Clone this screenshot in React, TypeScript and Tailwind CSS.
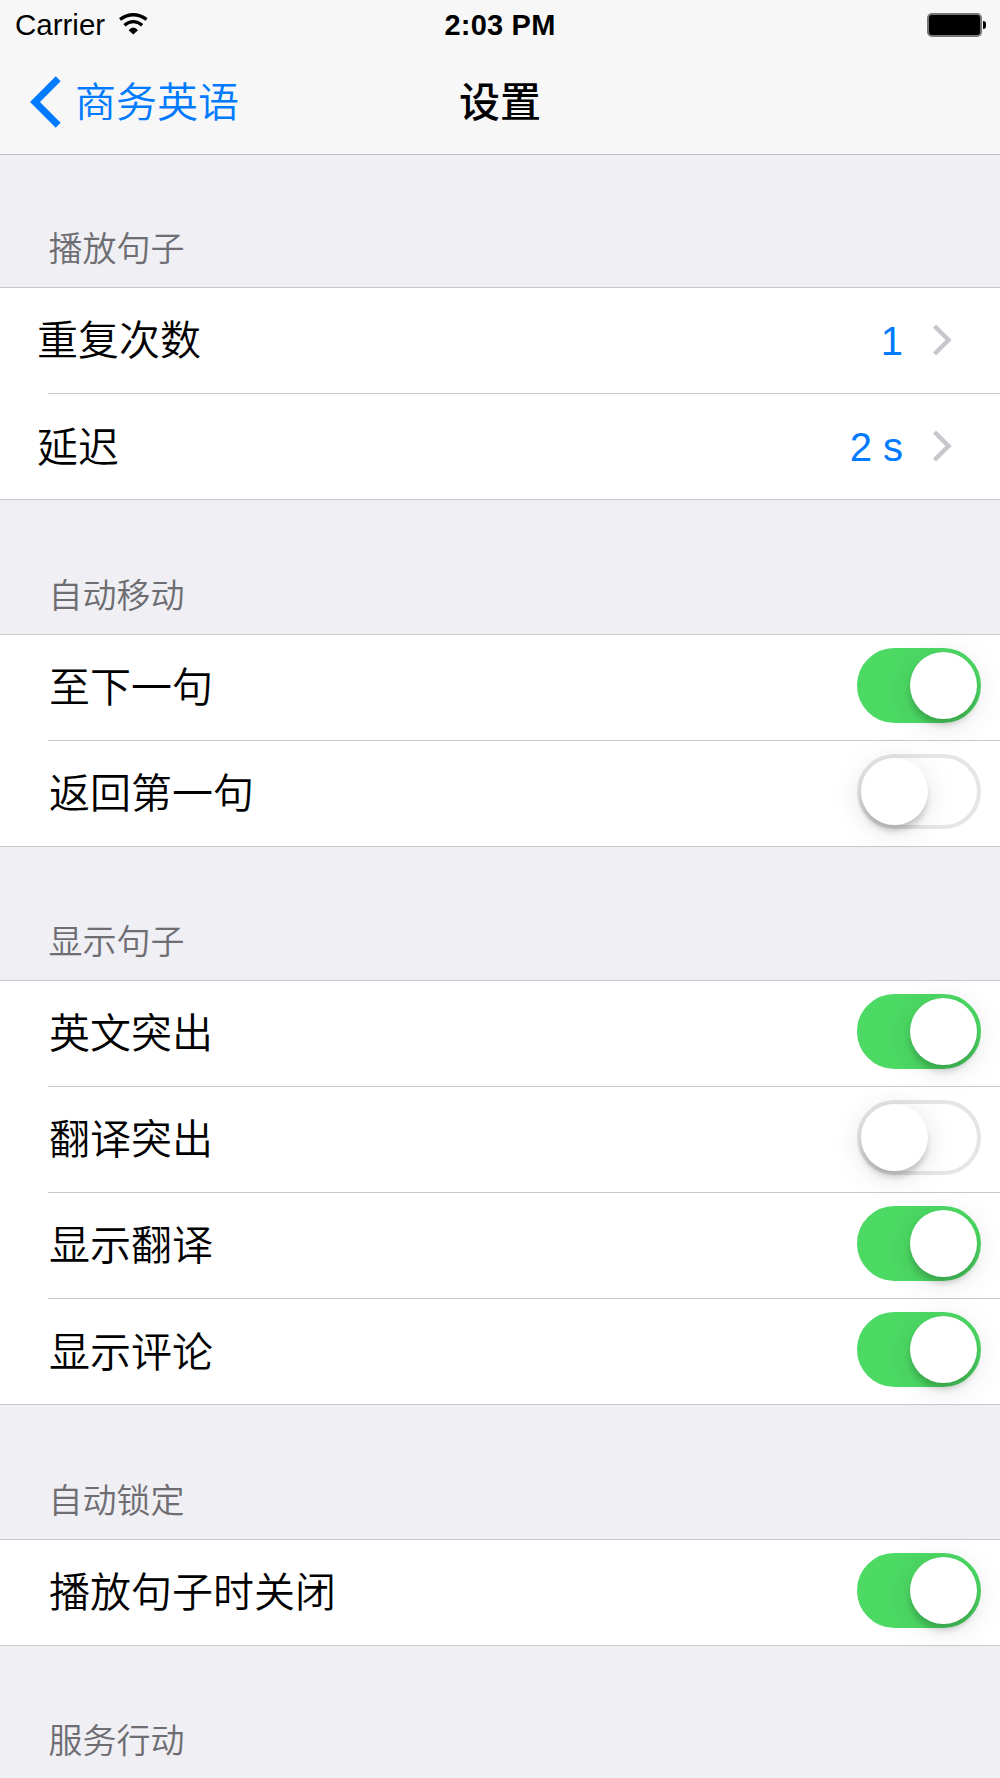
import React, { useState } from 'react';
import clsx from 'clsx';

interface RowData {
  label: string;
  value?: string;
  on?: boolean;
}

interface SectionData {
  title: string;
  rows: RowData[];
}

const SECTIONS: SectionData[] = [
  {
    title: '播放句子',
    rows: [
      { label: '重复次数', value: '1' },
      { label: '延迟', value: '2 s' },
    ],
  },
  {
    title: '自动移动',
    rows: [
      { label: '至下一句', on: true },
      { label: '返回第一句', on: false },
    ],
  },
  {
    title: '显示句子',
    rows: [
      { label: '英文突出', on: true },
      { label: '翻译突出', on: false },
      { label: '显示翻译', on: true },
      { label: '显示评论', on: true },
    ],
  },
  {
    title: '自动锁定',
    rows: [{ label: '播放句子时关闭', on: true }],
  },
  { title: '服务行动', rows: [] },
];

const StatusBar: React.FC = () => (
  <div className="flex h-[50px] items-center justify-between px-[14px] leading-none text-black">
    <div className="flex w-[300px] items-center gap-[13px] pl-px">
      <span className="text-[29.5px]">Carrier</span>
      <svg width="31" height="24" viewBox="0 0 31 24" className="mb-[2px]">
        <path d="M2 7.300Q15.300-1.900 28.600 7.300" fill="none" stroke="#000" strokeWidth="3.300" />
        <path d="M6.400 13.300Q15.300 6.100 24.200 13.300" fill="none" stroke="#000" strokeWidth="3.200" />
        <path d="M10.600 18.200Q15.300 13 20 18.200L15.300 22.500z" />
      </svg>
    </div>
    <span className="pt-px text-[29px] font-bold tracking-[0.2px]">2:03 PM</span>
    <div className="flex w-[300px] items-center justify-end gap-[1px]">
      <div className="h-[24px] w-[55px] rounded-[5px] border-2 border-[#777] bg-black" />
      <div className="h-[8px] w-[3px] rounded-r-full bg-black" />
    </div>
  </div>
);

const NavBar: React.FC = () => (
  <div className="flex h-[104px] items-center justify-between px-[30px] text-[41px]">
    <button className="flex w-[300px] items-center gap-[14px] text-[#007aff]">
      <svg width="31" height="52" viewBox="0 0 31 52">
        <path d="M28.200 2.800 5 26 28.200 49.200" fill="none" stroke="currentColor" strokeWidth="7" />
      </svg>
      <span className="pt-[3px] font-[350]">商务英语</span>
    </button>
    <h1 className="pt-[3px] font-medium text-black">设置</h1>
    <div className="w-[300px]" />
  </div>
);

const Toggle: React.FC<{ defaultOn: boolean }> = ({ defaultOn }) => {
  const [on, setOn] = useState(defaultOn);

  return (
    <button
      role="switch"
      aria-checked={on}
      onClick={() => setOn(!on)}
      className={clsx(
        'mb-[4px] flex h-[75px] w-[124px] shrink-0 items-center rounded-full border-4',
        on ? 'justify-end border-[#4cd964] bg-[#4cd964]' : 'justify-start border-[#e5e5e5] bg-white'
      )}
    >
      <span className="size-[67px] rounded-full bg-white shadow-[0_7px_6px_-1px_rgba(0,0,0,0.18),0_5px_30px_rgba(0,0,0,0.12)]" />
    </button>
  );
};

const Row: React.FC<{ row: RowData; first: boolean }> = ({ row, first }) => {
  const isLink = row.value !== undefined;

  return (
    <div className={clsx('h-[106.1px] border-[#c8c7cc]', first ? 'border-t' : 'pl-[48px]')}>
      <div
        className={clsx(
          'flex h-full items-center justify-between border-[#c8c7cc]',
          first ? 'pl-[48px]' : 'border-t',
          isLink ? 'pr-[47px]' : 'pr-[19px]'
        )}
      >
        <span
          className={clsx(
            'pt-[3px] text-[41px] font-[350] text-black',
            isLink ? '-ml-[11px]' : 'pl-px'
          )}
        >
          {row.label}
        </span>
        {isLink ? (
          <div className="flex items-center gap-[29px] text-[#007aff]">
            <span className="text-[40px]">{row.value}</span>
            <svg width="21" height="32" viewBox="0 0 21 32" className="mb-[2px]">
              <path d="M2.500 2 16.500 16 2.500 30" fill="none" stroke="#c7c7cc" strokeWidth="4.500" />
            </svg>
          </div>
        ) : (
          <Toggle defaultOn={!!row.on} />
        )}
      </div>
    </div>
  );
};

const Section: React.FC<{ section: SectionData; first: boolean }> = ({ section, first }) => (
  <section>
    <div className={clsx('flex items-end pb-[13px] pl-[48.500px]', first ? 'h-[132.200px]' : 'h-[133.200px]')}>
      <h2 className="text-[34px] font-[350] leading-[50px] text-[#6d6d72]">{section.title}</h2>
    </div>
    {section.rows.length > 0 && (
      <div className="border-b border-[#c8c7cc] bg-white">
        {section.rows.map((row, i) => (
          <Row key={row.label} row={row} first={i === 0} />
        ))}
      </div>
    )}
  </section>
);

export default function App() {
  return (
    <div className="h-[1778px] w-[1000px] overflow-hidden bg-[#efeff4] font-['Liberation_Sans','Noto_Sans_CJK_SC',sans-serif]">
      <header className="border-b border-[#c0c0c4] bg-[#f7f7f7]">
        <StatusBar />
        <NavBar />
      </header>
      {SECTIONS.map((section, i) => (
        <Section key={section.title} section={section} first={i === 0} />
      ))}
    </div>
  );
}
